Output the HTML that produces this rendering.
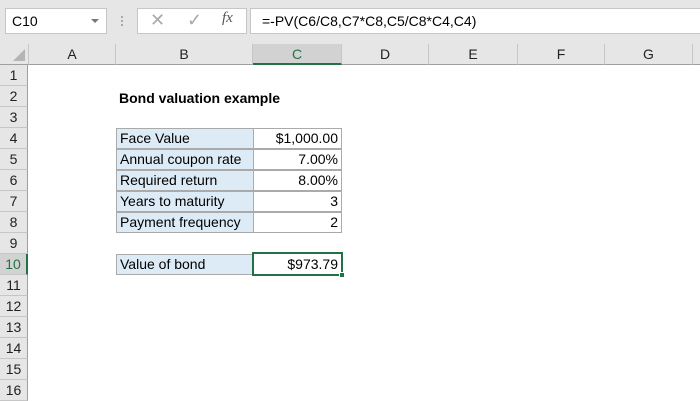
<!DOCTYPE html>
<html><head><style>
*{margin:0;padding:0;box-sizing:border-box}
body{width:700px;height:400px;overflow:hidden;background:#fff;font-family:"Liberation Sans",sans-serif;position:relative}
.a{position:absolute}
.t{font-family:"Liberation Sans",sans-serif;font-size:14px;color:#000;white-space:nowrap}
.ch{position:absolute;top:44px;height:21px;background:#e6e6e6;border-right:1px solid #c6c6c6;border-bottom:1px solid #9f9f9f;text-align:center;font-size:14px;line-height:21px;color:#222}
.rh{position:absolute;left:0;width:28px;height:21px;background:#e6e6e6;border-bottom:1px solid #c6c6c6;border-right:1px solid #9f9f9f;text-align:center;font-size:14px;line-height:21px;color:#222}
.c{position:absolute;height:21px;border:1px solid #aaa;font-size:14px;line-height:19px;padding:0 3px;white-space:nowrap}
.lb{background:#ddebf7}
.r{text-align:right}
</style></head><body>
<div class="a" style="left:0;top:0;width:700px;height:44px;background:#e6e6e6"></div>
<div class="a" style="left:5px;top:8px;width:102px;height:26px;background:#fff;border:1px solid #c6c6c6;font-size:14px;line-height:24px;padding-left:6px">C10</div>
<div class="a" style="left:91px;top:19px;width:0;height:0;border-left:4px solid transparent;border-right:4px solid transparent;border-top:4px solid #777"></div>
<div class="a" style="left:121px;top:16px;width:2px;height:10px;border-left:2px dotted #aaa"></div>
<div class="a" style="left:137px;top:8px;width:110px;height:26px;background:#fff;border:1px solid #c6c6c6"></div>
<div class="a" style="left:150px;top:10px;font-size:18px;color:#aaa">✕</div>
<div class="a" style="left:187px;top:10px;font-size:18px;color:#aaa">✓</div>
<div class="a" style="left:222px;top:10px;font-size:15px;font-style:italic;font-family:'Liberation Serif',serif;color:#555">fx</div>
<div class="a" style="left:250px;top:8px;width:452px;height:26px;background:#fff;border:1px solid #c6c6c6;font-size:14px;line-height:24px;padding-left:11px">=-PV(C6/C8,C7*C8,C5/C8*C4,C4)</div>
<div class="a" style="left:0;top:44px;width:29px;height:21px;background:#e6e6e6;border-right:1px solid #c6c6c6;border-bottom:1px solid #9f9f9f"></div>
<div class="a" style="left:13px;top:49px;width:0;height:0;border-left:12px solid transparent;border-bottom:12px solid #b4b4b4"></div>
<div class="ch" style="left:29px;width:87px">A</div>
<div class="ch" style="left:116px;width:137px">B</div>
<div class="ch" style="left:253px;width:89px;background:#d2d2d2;border-bottom:2px solid #217346;color:#217346">C</div>
<div class="ch" style="left:342px;width:87px">D</div>
<div class="ch" style="left:429px;width:89px">E</div>
<div class="ch" style="left:518px;width:87px">F</div>
<div class="ch" style="left:605px;width:88px">G</div>
<div class="ch" style="left:693px;width:10px"></div>
<div class="rh" style="top:65px">1</div>
<div class="rh" style="top:86px">2</div>
<div class="rh" style="top:107px">3</div>
<div class="rh" style="top:128px">4</div>
<div class="rh" style="top:149px">5</div>
<div class="rh" style="top:170px">6</div>
<div class="rh" style="top:191px">7</div>
<div class="rh" style="top:212px">8</div>
<div class="rh" style="top:233px">9</div>
<div class="rh" style="top:254px;background:#d2d2d2;border-right:2px solid #217346;color:#217346">10</div>
<div class="rh" style="top:275px">11</div>
<div class="rh" style="top:296px">12</div>
<div class="rh" style="top:317px">13</div>
<div class="rh" style="top:338px">14</div>
<div class="rh" style="top:359px">15</div>
<div class="rh" style="top:380px">16</div>
<div class="a t" style="left:119px;top:89px;font-weight:bold;line-height:19px">Bond valuation example</div>
<div class="c lb" style="left:116px;top:128px;width:138px">Face Value</div>
<div class="c r" style="left:253px;top:128px;width:89px">$1,000.00</div>
<div class="c lb" style="left:116px;top:149px;width:138px">Annual coupon rate</div>
<div class="c r" style="left:253px;top:149px;width:89px">7.00%</div>
<div class="c lb" style="left:116px;top:170px;width:138px">Required return</div>
<div class="c r" style="left:253px;top:170px;width:89px">8.00%</div>
<div class="c lb" style="left:116px;top:191px;width:138px">Years to maturity</div>
<div class="c r" style="left:253px;top:191px;width:89px">3</div>
<div class="c lb" style="left:116px;top:212px;width:138px">Payment frequency</div>
<div class="c r" style="left:253px;top:212px;width:89px">2</div>
<div class="c lb" style="left:116px;top:254px;width:138px">Value of bond</div>
<div class="c r" style="left:253px;top:254px;width:89px;border:none;line-height:21px;padding-right:4px">$973.79</div>
<div class="a" style="left:252px;top:252px;width:91px;height:24px;border:2px solid #217346"></div>
<div class="a" style="left:339px;top:272px;width:6px;height:6px;background:#217346;border:1px solid #fff"></div>
</body></html>
